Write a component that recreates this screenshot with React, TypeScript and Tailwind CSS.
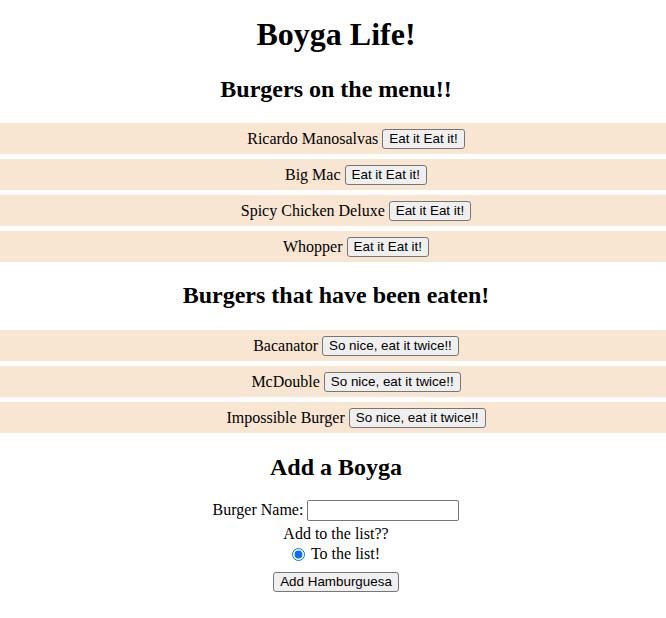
const menu = ["Ricardo Manosalvas", "Big Mac", "Spicy Chicken Deluxe", "Whopper"];
const eaten = ["Bacanator", "McDouble", "Impossible Burger"];

function Btn({ children }: { children: string }) {
  return (
    <button className="h-[20px] rounded-[3px] border border-[#767676] bg-[#efefef] px-[6px] font-['Liberation_Sans',Arial,sans-serif] text-[13.4px] leading-none text-black">
      {children}
    </button>
  );
}

function BurgerRow({ name, label }: { name: string; label: string }) {
  return (
    <li className="flex h-[31px] items-center justify-center gap-[4px] bg-[#f8e6d3] pl-[46px]">
      <span className="leading-[18px]">{name}</span>
      <Btn>{label}</Btn>
    </li>
  );
}

export default function App() {
  return (
    <div className="flex min-h-[618px] w-full flex-col bg-white text-center font-['Liberation_Serif','Times_New_Roman',serif] text-[16px] text-black">
      <h1 className="mt-[16px] pl-[6px] text-[32px] font-bold leading-[37px]">Boyga Life!</h1>
      <h2 className="mt-[22px] pl-[6px] text-[24px] font-bold leading-[28px]">Burgers on the menu!!</h2>
      <ul className="mt-[20px] flex flex-col gap-[5px]">
        {menu.map((b) => (
          <BurgerRow key={b} name={b} label="Eat it Eat it!" />
        ))}
      </ul>
      <h2 className="mt-[19px] pl-[6px] text-[24px] font-bold leading-[28px]">Burgers that have been eaten!</h2>
      <ul className="mt-[21px] flex flex-col gap-[5px]">
        {eaten.map((b) => (
          <BurgerRow key={b} name={b} label="So nice, eat it twice!!" />
        ))}
      </ul>
      <h2 className="mt-[20px] pl-[6px] text-[24px] font-bold leading-[28px]">Add a Boyga</h2>
      <form className="mt-[18px] flex flex-col items-center pl-[6px]" onSubmit={(e) => e.preventDefault()}>
        <div className="flex h-[22px] items-center justify-center gap-[4px]">
          <span className="leading-[18px]">Burger Name:</span>
          <input
            type="text"
            className="h-[21px] w-[152px] rounded-[2px] border border-[#767676] bg-white px-[2px] text-[13px]"
          />
        </div>
        <div className="mt-[3px] leading-[20px]">Add to the list??</div>
        <label className="flex h-[20px] items-center justify-center gap-[6px] leading-[20px]">
          <input type="radio" defaultChecked className="h-[13px] w-[13px] accent-[#0b6cf5]" />
          <span>To the list!</span>
        </label>
        <div className="mt-[5px]">
          <Btn>Add Hamburguesa</Btn>
        </div>
      </form>
    </div>
  );
}
